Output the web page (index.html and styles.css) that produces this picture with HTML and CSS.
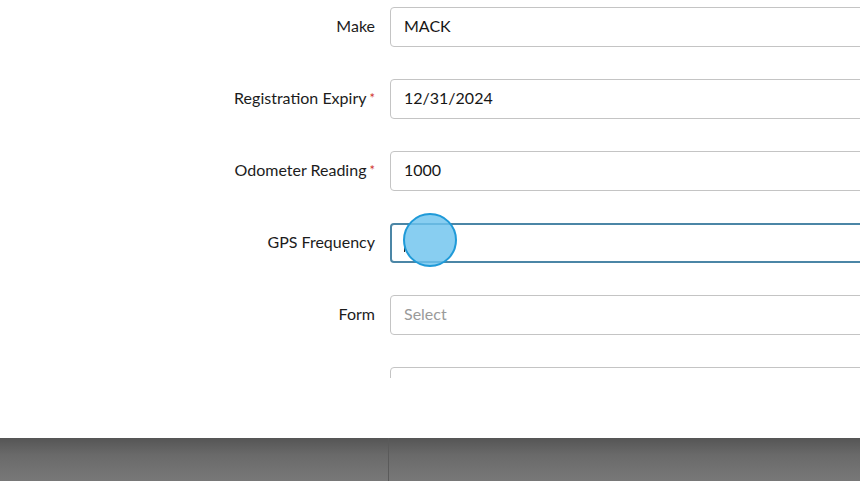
FILE: index.html
```html
<!DOCTYPE html>
<html>
<head>
<meta charset="utf-8">
<link rel="stylesheet" href="styles.css">
</head>
<body>
<div class="panel">
  <div class="scroller">
    <div class="form">
      <div class="row"><label class="lbl">Make</label><div class="field">MACK</div></div>
      <div class="row"><label class="lbl">Registration Expiry<span class="req">*</span></label><div class="field">12/31/2024</div></div>
      <div class="row"><label class="lbl">Odometer Reading<span class="req">*</span></label><div class="field">1000</div></div>
      <div class="row"><label class="lbl">GPS Frequency</label><div class="field focus"><span class="caret"></span></div></div>
      <div class="row"><label class="lbl">Form</label><div class="field placeholder">Select</div></div>
      <div class="row"><label class="lbl"></label><div class="field"></div></div>
    </div>
  </div>
</div>
<div class="footer"><div class="footer-left"></div><div class="footer-right"></div></div>
<div class="touch"></div>
</body>
</html>
```
FILE: styles.css
```css
html, body { margin: 0; padding: 0; }
body {
  width: 860px;
  height: 481px;
  overflow: hidden;
  background: #fff;
  font-family: Lato, "Open Sans", Arial, sans-serif;
  position: relative;
}
.panel {
  height: 438px;
  background: #fff;
}
.scroller {
  height: 378px;
  overflow: hidden;
}
.form {
  display: flex;
  flex-direction: column;
  gap: 32px;
  padding-top: 7px;
}
.row {
  display: flex;
  align-items: center;
}
.lbl {
  flex: 0 0 375px;
  box-sizing: border-box;
  text-align: right;
  font-size: 16px;
  color: #1c1c1c;
  padding-bottom: 4px;
}
.req {
  color: #d0342c;
  font-size: 13px;
  margin-left: 3px;
  position: relative;
  top: -1px;
}
.field {
  flex: 0 0 520px;
  margin-left: 15px;
  height: 40px;
  box-sizing: border-box;
  border: 1px solid #c4c4c4;
  border-radius: 4px;
  padding: 0 13px 4px;
  display: flex;
  align-items: center;
  font-size: 16px;
  color: #161616;
  background: #fff;
}
.field.placeholder { color: #9a9a9a; }
.field.focus {
  border: 2px solid #4b86a6;
  padding: 0 12px;
}
.caret {
  width: 1px;
  height: 17px;
  background: #222;
}
.footer {
  height: 43px;
  display: flex;
  background: linear-gradient(#555, #6a6a6a 40%, #787878);
}
.footer-left {
  flex: 0 0 388px;
  border-right: 1px solid #5a5a5a;
}
.footer-right { flex: 1; }
.touch {
  position: absolute;
  left: 403px;
  top: 213px;
  width: 50px;
  height: 50px;
  border-radius: 50%;
  background: rgba(110, 195, 238, 0.82);
  border: 2px solid #1f9ad8;
}
```
